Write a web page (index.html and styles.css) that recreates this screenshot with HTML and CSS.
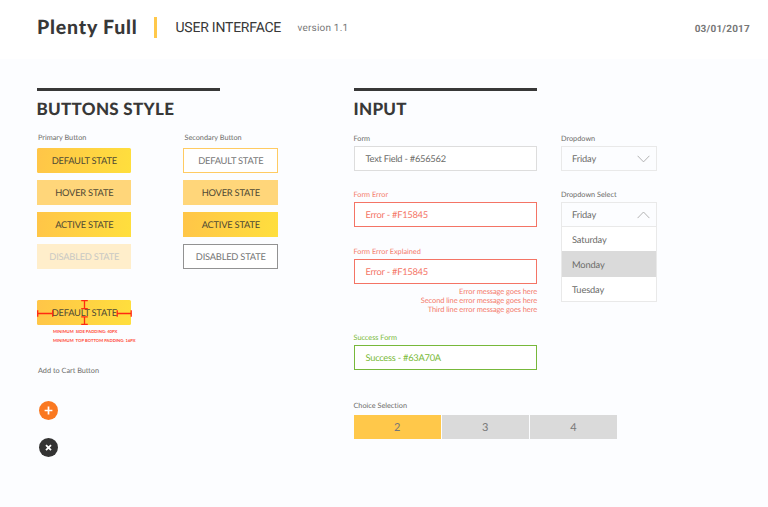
FILE: index.html
```html
<!DOCTYPE html>
<html lang="en">
<head>
<meta charset="utf-8">
<title>Plenty Full – User Interface</title>
<link rel="stylesheet" href="styles.css">
</head>
<body>
<header class="header">
  <span class="brand">Plenty Full</span>
  <span class="divider"></span>
  <span class="subtitle">USER INTERFACE</span>
  <span class="version">version 1.1</span>
  <time class="date">03/01/2017</time>
</header>
<main class="main">
  <section class="buttons">
    <h2 class="heading">BUTTONS STYLE</h2>
    <div class="button-columns">
      <div class="button-column">
        <div class="label">Primary Button</div>
        <div class="btn gradient rounded">DEFAULT STATE</div>
        <div class="btn hover">HOVER STATE</div>
        <div class="btn gradient">ACTIVE STATE</div>
        <div class="btn disabled">DISABLED STATE</div>
      </div>
      <div class="button-column">
        <div class="label">Secondary Button</div>
        <div class="btn outline">DEFAULT STATE</div>
        <div class="btn hover">HOVER STATE</div>
        <div class="btn gradient">ACTIVE STATE</div>
        <div class="btn outline-gray">DISABLED STATE</div>
      </div>
    </div>
    <div class="btn gradient rounded spec">DEFAULT STATE
      <svg class="measure" viewBox="0 0 95 25" fill="none" stroke="#ff2a12" stroke-width="1.3">
        <path d="M.7 10.2v6.5M.7 13.5h15M15.7 10.2v6.5M80.2 10.2v6.5M80.2 13.5h14M94.2 10.2v6.5M44.2 .7h6.6M47.5 .7v8M44.2 8.7h6.6M44.2 16.9h6.6M47.5 16.9v7.5M44.2 24.4h6.6"/>
      </svg>
    </div>
    <div class="notes">
      <div>MINIMUM&nbsp; SIDE PADDING: 40PX</div>
      <div>MINIMUM&nbsp; TOP BOTTOM PADDING: 16PX</div>
    </div>
    <div class="label cart-label">Add to Cart Button</div>
    <svg class="round" viewBox="0 0 19 19"><circle cx="9.5" cy="9.5" r="9.5" fill="#fa7820"/><path d="M9.5 5.6v7.8M5.6 9.5h7.8" stroke="#fff" stroke-width="1.7"/></svg>
    <svg class="round" viewBox="0 0 19 19"><circle cx="9.5" cy="9.5" r="9.5" fill="#333"/><path d="M7 7.1l5 5M12 7.1l-5 5" stroke="#fff" stroke-width="1.8"/></svg>
  </section>
  <section class="inputs">
    <h2 class="heading">INPUT</h2>
    <div class="input-columns">
      <div class="forms">
        <div class="label">Form</div>
        <div class="field">Text Field - #656562</div>
        <div class="label error-text error-label">Form Error</div>
        <div class="field error">Error - #F15845</div>
        <div class="label error-text explained-label">Form Error Explained</div>
        <div class="field error">Error - #F15845</div>
        <div class="message">Error message goes here<br>Second line error message goes here<br>Third line error message goes here</div>
        <div class="label success-label">Success Form</div>
        <div class="field success">Success - #63A70A</div>
      </div>
      <div class="dropdowns">
        <div class="label">Dropdown</div>
        <div class="select">Friday<svg class="chevron" viewBox="0 0 13 8"><path d="M.6 .8l5.9 6.1L12.4 .8"/></svg></div>
        <div class="label select-label">Dropdown Select</div>
        <div class="select">Friday<svg class="chevron" viewBox="0 0 13 8"><path d="M.6 7.1l5.9-6.1 5.9 6.1"/></svg></div>
        <div class="options">
          <div class="option">Saturday</div>
          <div class="option selected">Monday</div>
          <div class="option">Tuesday</div>
        </div>
      </div>
    </div>
    <div class="label choice-label">Choice Selection</div>
    <div class="choices">
      <div class="choice chosen">2</div>
      <div class="choice">3</div>
      <div class="choice">4</div>
    </div>
  </section>
</main>
</body>
</html>
```
FILE: styles.css
```css
* { box-sizing: border-box; }
body {
  margin: 0;
  height: 507px;
  overflow: hidden;
  background: #fcfdff;
  color: #6c6c69;
  font-family: Lato, sans-serif;
  text-rendering: geometricPrecision;
}
.header {
  display: flex;
  align-items: center;
  height: 59px;
  padding: 0 18px 4px 37px;
  background: #fff;
  font-family: Roboto, sans-serif;
  white-space: nowrap;
}
.brand {
  width: 117px;
  color: #383838;
  font: 900 19.5px/24px Lato, sans-serif;
  letter-spacing: .8px;
}
.divider { width: 3px; height: 21px; background: #ffc84a; }
.subtitle { width: 122px; margin-left: 18.5px; color: #383838; font-size: 14px; letter-spacing: -.22px; }
.version { padding-top: 2px; color: #777; font-size: 10px; letter-spacing: .2px; }
.date { margin-left: auto; padding-top: 4px; color: #777; font-size: 10px; font-weight: 700; letter-spacing: .2px; }
.main { display: flex; padding: 28.5px 0 0 36.5px; }
.buttons { width: 317px; }
.heading {
  width: 183.5px;
  height: 45px;
  margin: 0;
  padding-top: 8px;
  border-top: 3px solid #383838;
  color: #383838;
  font: 900 17px/20px Lato, sans-serif;
  letter-spacing: .3px;
  white-space: nowrap;
}
.label { height: 10px; font-size: 7.3px; line-height: 10px; white-space: nowrap; }
.button-columns { display: flex; gap: 52px; }
.button-column { width: 94.5px; }
.button-column .label { margin-bottom: 5.5px; padding-left: 1.5px; }
.btn {
  width: 94.5px;
  height: 25px;
  margin-bottom: 7px;
  padding-left: 1px;
  color: #4f4a35;
  font-size: 9.3px;
  line-height: 26px;
  letter-spacing: -.22px;
  text-align: center;
  white-space: nowrap;
}
.gradient { background: linear-gradient(100deg, #ffc548, #ffdf3d); }
.rounded { border-radius: 1.5px; }
.hover { background: #ffd67a; }
.disabled { background: #ffeecb; color: #c9c9c4; }
.outline, .outline-gray { border: 1px solid #ffcb62; background: #fff; color: #777; line-height: 24px; }
.outline-gray { border-color: #929292; }
.spec { position: relative; margin: 24px 0 0; }
.measure { position: absolute; left: 0; top: 0; width: 95px; height: 25px; }
.notes { height: 20px; margin: 1.5px 0 0 16.5px; color: #ff4936; font-size: 4.2px; font-weight: 700; line-height: 9.5px; white-space: nowrap; }
.cart-label { margin: 19.5px 0 24.5px; padding-left: 1.5px; }
.round { display: block; width: 19px; height: 19px; margin: 0 0 18px 2.2px; }
.input-columns { display: flex; gap: 24px; padding-top: 1.5px; }
.forms { width: 183.5px; }
.field {
  height: 25px;
  margin-top: 2px;
  padding-left: 11px;
  border: 1px solid #ddd;
  background: #fff;
  font-size: 9.3px;
  line-height: 24px;
  letter-spacing: -.25px;
}
.error-text, .message { color: #f47a6b; }
.error-label { margin-top: 19px; }
.error { border: 1px solid #f47465; color: #f47465; }
.explained-label { margin-top: 20px; }
.message { margin-top: 3px; font-size: 7.5px; line-height: 9px; letter-spacing: -.1px; text-align: right; white-space: nowrap; }
.success-label { margin-top: 19px; color: #7aba38; }
.success { border: 1px solid #77b83a; color: #7aba38; }
.dropdowns { width: 96px; }
.select {
  display: flex;
  align-items: center;
  justify-content: space-between;
  height: 25px;
  margin-top: 2px;
  padding: 0 6px 0 10px;
  border: 1px solid #e9e9e9;
  font-size: 9.3px;
  letter-spacing: -.15px;
}
.select-label { margin-top: 19px; }
.chevron { width: 13px; height: 8px; fill: none; stroke: #aaa; stroke-width: .9; }
.options { border: solid #e9e9e9; border-width: 0 1px 1px; background: #fff; }
.option { height: 24px; padding-left: 10px; font-size: 9.3px; line-height: 25px; letter-spacing: -.15px; }
.selected { height: 26px; background: #dadada; line-height: 27px; }
.choice-label { margin: 31px 0 4px; }
.choices { display: flex; gap: 1px; width: 263.5px; }
.choice { flex: 1; height: 24px; background: #dadada; color: #777; font-size: 11px; line-height: 25px; text-align: center; }
.chosen { background: #ffc84a; }
```
